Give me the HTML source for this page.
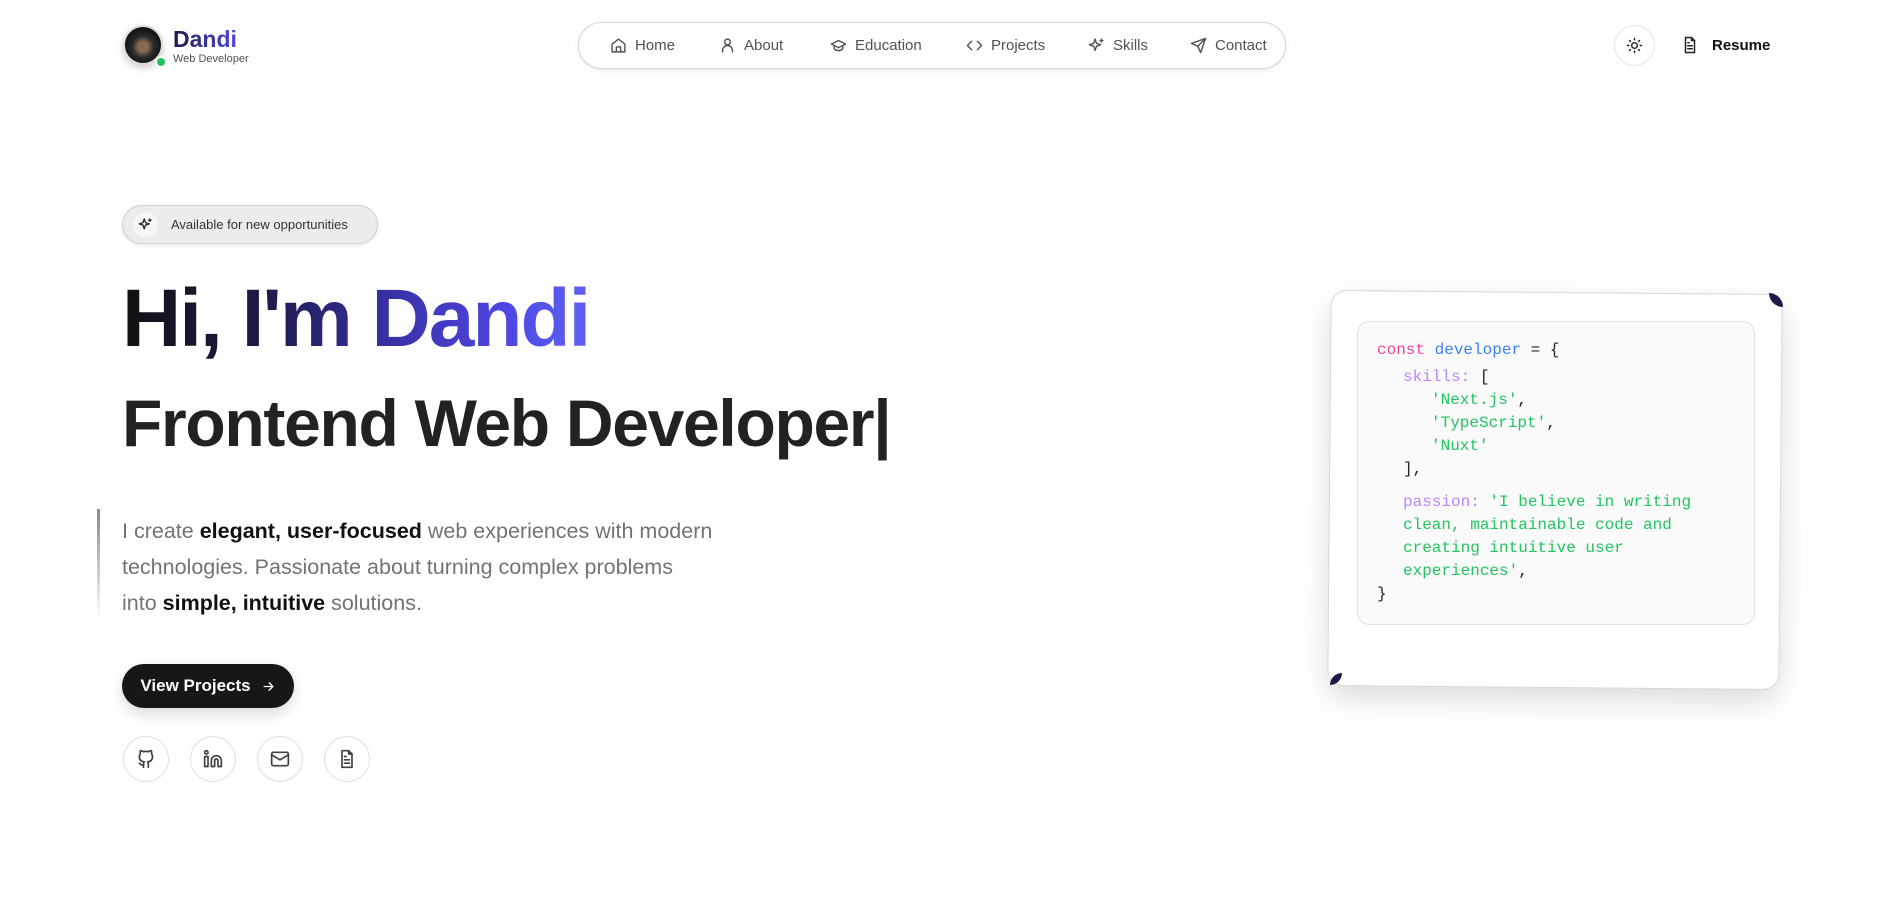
<!DOCTYPE html>
<html><head><meta charset="utf-8">
<style>
*{margin:0;padding:0;box-sizing:border-box}
body{width:1899px;height:908px;background:#fff;font-family:"Liberation Sans",sans-serif;color:#171717;position:relative;overflow:hidden}
.abs{position:absolute}
.nav{left:578px;top:22px;width:708px;height:47px;border:1px solid #d4d4d4;border-radius:24px;box-shadow:0 2px 6px rgba(0,0,0,.08);background:#fff}
.ni{position:absolute;top:0;height:45px;display:flex;align-items:center;font-size:15px;color:#525252}
.ni svg{margin-right:8px}
svg{fill:none;stroke:currentColor;stroke-width:2;stroke-linecap:round;stroke-linejoin:round}
.soc{width:46px;height:46px;border:1px solid #e0e0e0;border-radius:50%;display:flex;align-items:center;justify-content:center;color:#404040}
.code{font-family:"Liberation Mono",monospace;font-size:16px;position:absolute;white-space:pre}
.k{color:#ec4899}.b{color:#3b82f6}.p{color:#c084fc}.g{color:#22c55e}.d{color:#262626}
</style></head><body>

<div class="abs" style="left:123px;top:25px;width:40px;height:40px;border-radius:50%;background:radial-gradient(circle at 50% 55%,#8a6a50 0 18%,#2b2b2b 40%,#111 70%);border:2px solid #ddd;box-shadow:0 3px 8px rgba(0,0,0,.2)"></div>
<div class="abs" style="left:155px;top:56px;width:12px;height:12px;border-radius:50%;background:#22c55e;border:2px solid #fff"></div>
<div class="abs" style="left:173px;top:26px;font-size:23px;font-weight:bold;background:linear-gradient(90deg,#1e1b4b,#4f46e5);-webkit-background-clip:text;color:transparent">Dandi</div>
<div class="abs" style="left:173px;top:53px;font-size:11px;color:#525252">Web Developer</div>

<div class="abs nav">
 <div class="ni" style="left:31px"><svg width="17" height="17" viewBox="0 0 24 24"><path d="M3 10l9-7 9 7v11H3z"/><path d="M9 21v-7h6v7"/></svg>Home</div>
 <div class="ni" style="left:140px"><svg width="17" height="17" viewBox="0 0 24 24"><circle cx="12" cy="7" r="4"/><path d="M5 21v-2a7 7 0 0114 0v2"/></svg>About</div>
 <div class="ni" style="left:251px"><svg width="17" height="17" viewBox="0 0 24 24"><path d="M2 10l10-5 10 5-10 5z"/><path d="M6 12v5c3 3 9 3 12 0v-5"/></svg>Education</div>
 <div class="ni" style="left:387px"><svg width="17" height="17" viewBox="0 0 24 24"><path d="M8 6l-6 6 6 6M16 6l6 6-6 6"/></svg>Projects</div>
 <div class="ni" style="left:509px"><svg width="17" height="17" viewBox="0 0 24 24"><path d="M10 3l2 6 6 2-6 2-2 6-2-6-6-2 6-2z"/><path d="M19 3v4M17 5h4"/></svg>Skills</div>
 <div class="ni" style="left:611px"><svg width="17" height="17" viewBox="0 0 24 24"><path d="M22 2L11 13M22 2l-7 20-4-9-9-4z"/></svg>Contact</div>
</div>

<div class="abs" style="left:1614px;top:25px;width:41px;height:41px;border:1px solid #e5e5e5;border-radius:50%;display:flex;align-items:center;justify-content:center;color:#222"><svg width="17" height="17" viewBox="0 0 24 24"><circle cx="12" cy="12" r="4"/><path d="M12 2v2M12 20v2M4.9 4.9l1.4 1.4M17.7 17.7l1.4 1.4M2 12h2M20 12h2M4.9 19.1l1.4-1.4M17.7 6.3l1.4-1.4"/></svg></div>
<div class="abs" style="left:1681px;top:36px;color:#222"><svg width="18" height="18" viewBox="0 0 24 24"><path d="M14 2H6v20h12V6z"/><path d="M14 2v4h4M9 13h6M9 17h6M9 9h2"/></svg></div>
<div class="abs" style="left:1712px;top:37px;font-size:15px;font-weight:bold;color:#111">Resume</div>

<div class="abs" style="left:122px;top:205px;width:256px;height:39px;border:1px solid #cfcfcf;border-radius:20px;background:#ececec;box-shadow:0 2px 4px rgba(0,0,0,.08)"></div>
<div class="abs" style="left:133px;top:212px;width:25px;height:25px;border-radius:50%;background:#f7f7f7;display:flex;align-items:center;justify-content:center;color:#222"><svg width="15" height="15" viewBox="0 0 24 24"><path d="M10 3l2 6 6 2-6 2-2 6-2-6-6-2 6-2z"/><path d="M19 3v4M17 5h4"/></svg></div>
<div class="abs" style="left:171px;top:217px;font-size:13px;color:#333">Available for new opportunities</div>

<div class="abs" style="left:122px;top:278px;font-size:82px;font-weight:bold;letter-spacing:-2px;line-height:1;background:linear-gradient(90deg,#111 0,#1e1b4b 30%,#3730a3 55%,#4f46e5 80%,#6366f1 100%);-webkit-background-clip:text;color:transparent;width:480px">Hi, I'm Dandi</div>
<div class="abs" style="left:122px;top:390px;font-size:66px;font-weight:bold;letter-spacing:-1.3px;line-height:1;color:#222">Frontend Web Developer|</div>

<div class="abs" style="left:97px;top:509px;width:3px;height:110px;background:linear-gradient(#888,#fff)"></div>
<div class="abs" style="left:122px;top:513px;width:800px;font-size:21.5px;line-height:36px;color:#737373;white-space:nowrap">I create <b style="color:#111">elegant, user-focused</b> web experiences with modern<br>technologies. Passionate about turning complex problems<br>into <b style="color:#111">simple, intuitive</b> solutions.</div>

<div class="abs" style="left:122px;top:664px;width:172px;height:44px;border-radius:22px;background:#171717;color:#fff;font-size:17px;font-weight:bold;display:flex;align-items:center;justify-content:center;box-shadow:0 6px 14px rgba(0,0,0,.15)">View Projects<svg style="margin-left:10px" width="15" height="15" viewBox="0 0 24 24"><path d="M5 12h14M13 6l6 6-6 6"/></svg></div>

<div class="abs soc" style="left:123px;top:736px"><svg width="20" height="20" viewBox="0 0 24 24"><path d="M9 22v-4c0-1 .3-2 1-2.5-3-.3-6-1.5-6-6.5 0-1.4.5-2.6 1.3-3.5-.2-.5-.5-1.8.1-3.5 0 0 1-.3 3.5 1.3a11 11 0 016 0C17.3 1.700 18.4 2 18.4 2c.6 1.7.3 3 .1 3.500.8.900 1.300 2.100 1.300 3.500 0 5-3 6.200-6 6.500.7.600 1 1.500 1 2.500v4"/><path d="M9 19c-3 1-4-1-5-2"/></svg></div>
<div class="abs soc" style="left:190px;top:736px"><svg width="20" height="20" viewBox="0 0 24 24"><path d="M16 8a6 6 0 016 6v7h-4v-7a2 2 0 00-4 0v7h-4v-7a6 6 0 016-6z"/><rect x="2" y="9" width="4" height="12"/><circle cx="4" cy="4" r="2"/></svg></div>
<div class="abs soc" style="left:257px;top:736px"><svg width="20" height="20" viewBox="0 0 24 24"><rect x="2" y="4" width="20" height="16" rx="2"/><path d="M22 7l-10 6L2 7"/></svg></div>
<div class="abs soc" style="left:324px;top:736px"><svg width="20" height="20" viewBox="0 0 24 24"><path d="M14 2H6v20h12V6z"/><path d="M14 2v4h4M9 13h6M9 17h6M9 9h2"/></svg></div>

<div class="abs" style="left:1329px;top:292px;width:452px;height:396px;border:1px solid #d8d8d8;border-radius:16px;background:#fff;box-shadow:0 12px 30px rgba(0,0,0,.14);transform:rotate(0.5deg)"></div>
<div class="abs" style="left:1769px;top:293px;width:14px;height:14px;background:#1e1b4b;border-radius:0 14px 0 14px"></div>
<div class="abs" style="left:1330px;top:673px;width:12px;height:12px;background:#1e1b4b;border-radius:12px 0 12px 0"></div>
<div class="abs" style="left:1357px;top:321px;width:398px;height:304px;border:1px solid #e3e3e3;border-radius:12px;background:#fafafa"></div>
<div class="code" style="left:1377px;top:341px"><span class="k">const</span> <span class="b">developer</span> <span class="d">= {</span></div>
<div class="code" style="left:1403px;top:368px"><span class="p">skills:</span> <span class="d">[</span></div>
<div class="code g" style="left:1431px;top:391px">'Next.js'<span class="d">,</span></div>
<div class="code g" style="left:1431px;top:414px">'TypeScript'<span class="d">,</span></div>
<div class="code g" style="left:1431px;top:437px">'Nuxt'</div>
<div class="code d" style="left:1403px;top:460px">],</div>
<div class="code" style="left:1403px;top:491px;line-height:23px"><span class="p">passion:</span> <span class="g">'I believe in writing
clean, maintainable code and
creating intuitive user
experiences'</span><span class="d">,</span></div>
<div class="code d" style="left:1377px;top:585px">}</div>
</body></html>
